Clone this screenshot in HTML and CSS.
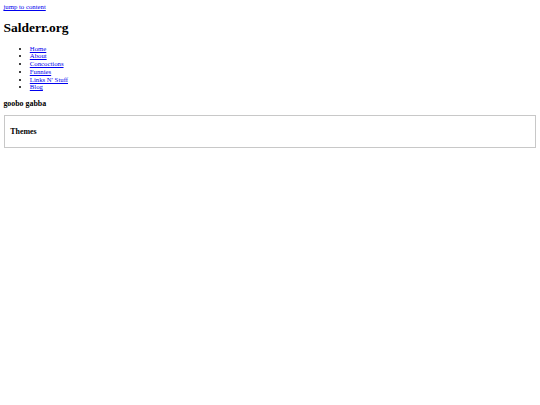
FILE: index.html
```html
<!DOCTYPE html>
<html lang="en">
<head>
<meta charset="utf-8">
<title>Salderr.org</title>
<link rel="stylesheet" href="styles.css">
</head>
<body class="page">
<a class="skip" href="#content">jump to content</a>
<header class="site-header">
  <h1 class="site-title">Salderr.org</h1>
  <nav class="site-nav">
    <ul class="nav-list">
      <li><a href="#">Home</a></li>
      <li><a href="#">About</a></li>
      <li><a href="#">Concoctions</a></li>
      <li><a href="#">Funnies</a></li>
      <li><a href="#">Links N' Stuff</a></li>
      <li><a href="#">Blog</a></li>
    </ul>
  </nav>
</header>
<main id="content" class="content">
  <h3 class="tagline">goobo gabba</h3>
  <fieldset class="themes">
    <h3 class="themes-title">Themes</h3>
  </fieldset>
</main>
</body>
</html>
```
FILE: styles.css
```css
html {
  background: #fff;
}
.page {
  margin: 3.4px;
  font-family: "Liberation Serif", "Times New Roman", serif;
  font-size: 6.75px;
  line-height: 7.76px;
  color: #000;
}
a {
  color: #0000ee;
}
.site-title {
  font-size: 13.5px;
  line-height: 15.5px;
  margin: 9px 0;
}
.nav-list {
  margin: 6.75px 0;
  padding-left: 26.4px;
}
.tagline,
.themes-title {
  font-size: 7.9px;
  line-height: 9.1px;
  margin: 7.9px 0;
}
.tagline {
  margin-bottom: 7.2px;
}
.themes {
  margin: 0 0.85px;
  padding: 2.4px 5px 3px;
  border: 1px solid #c8c8c8;
}
```
